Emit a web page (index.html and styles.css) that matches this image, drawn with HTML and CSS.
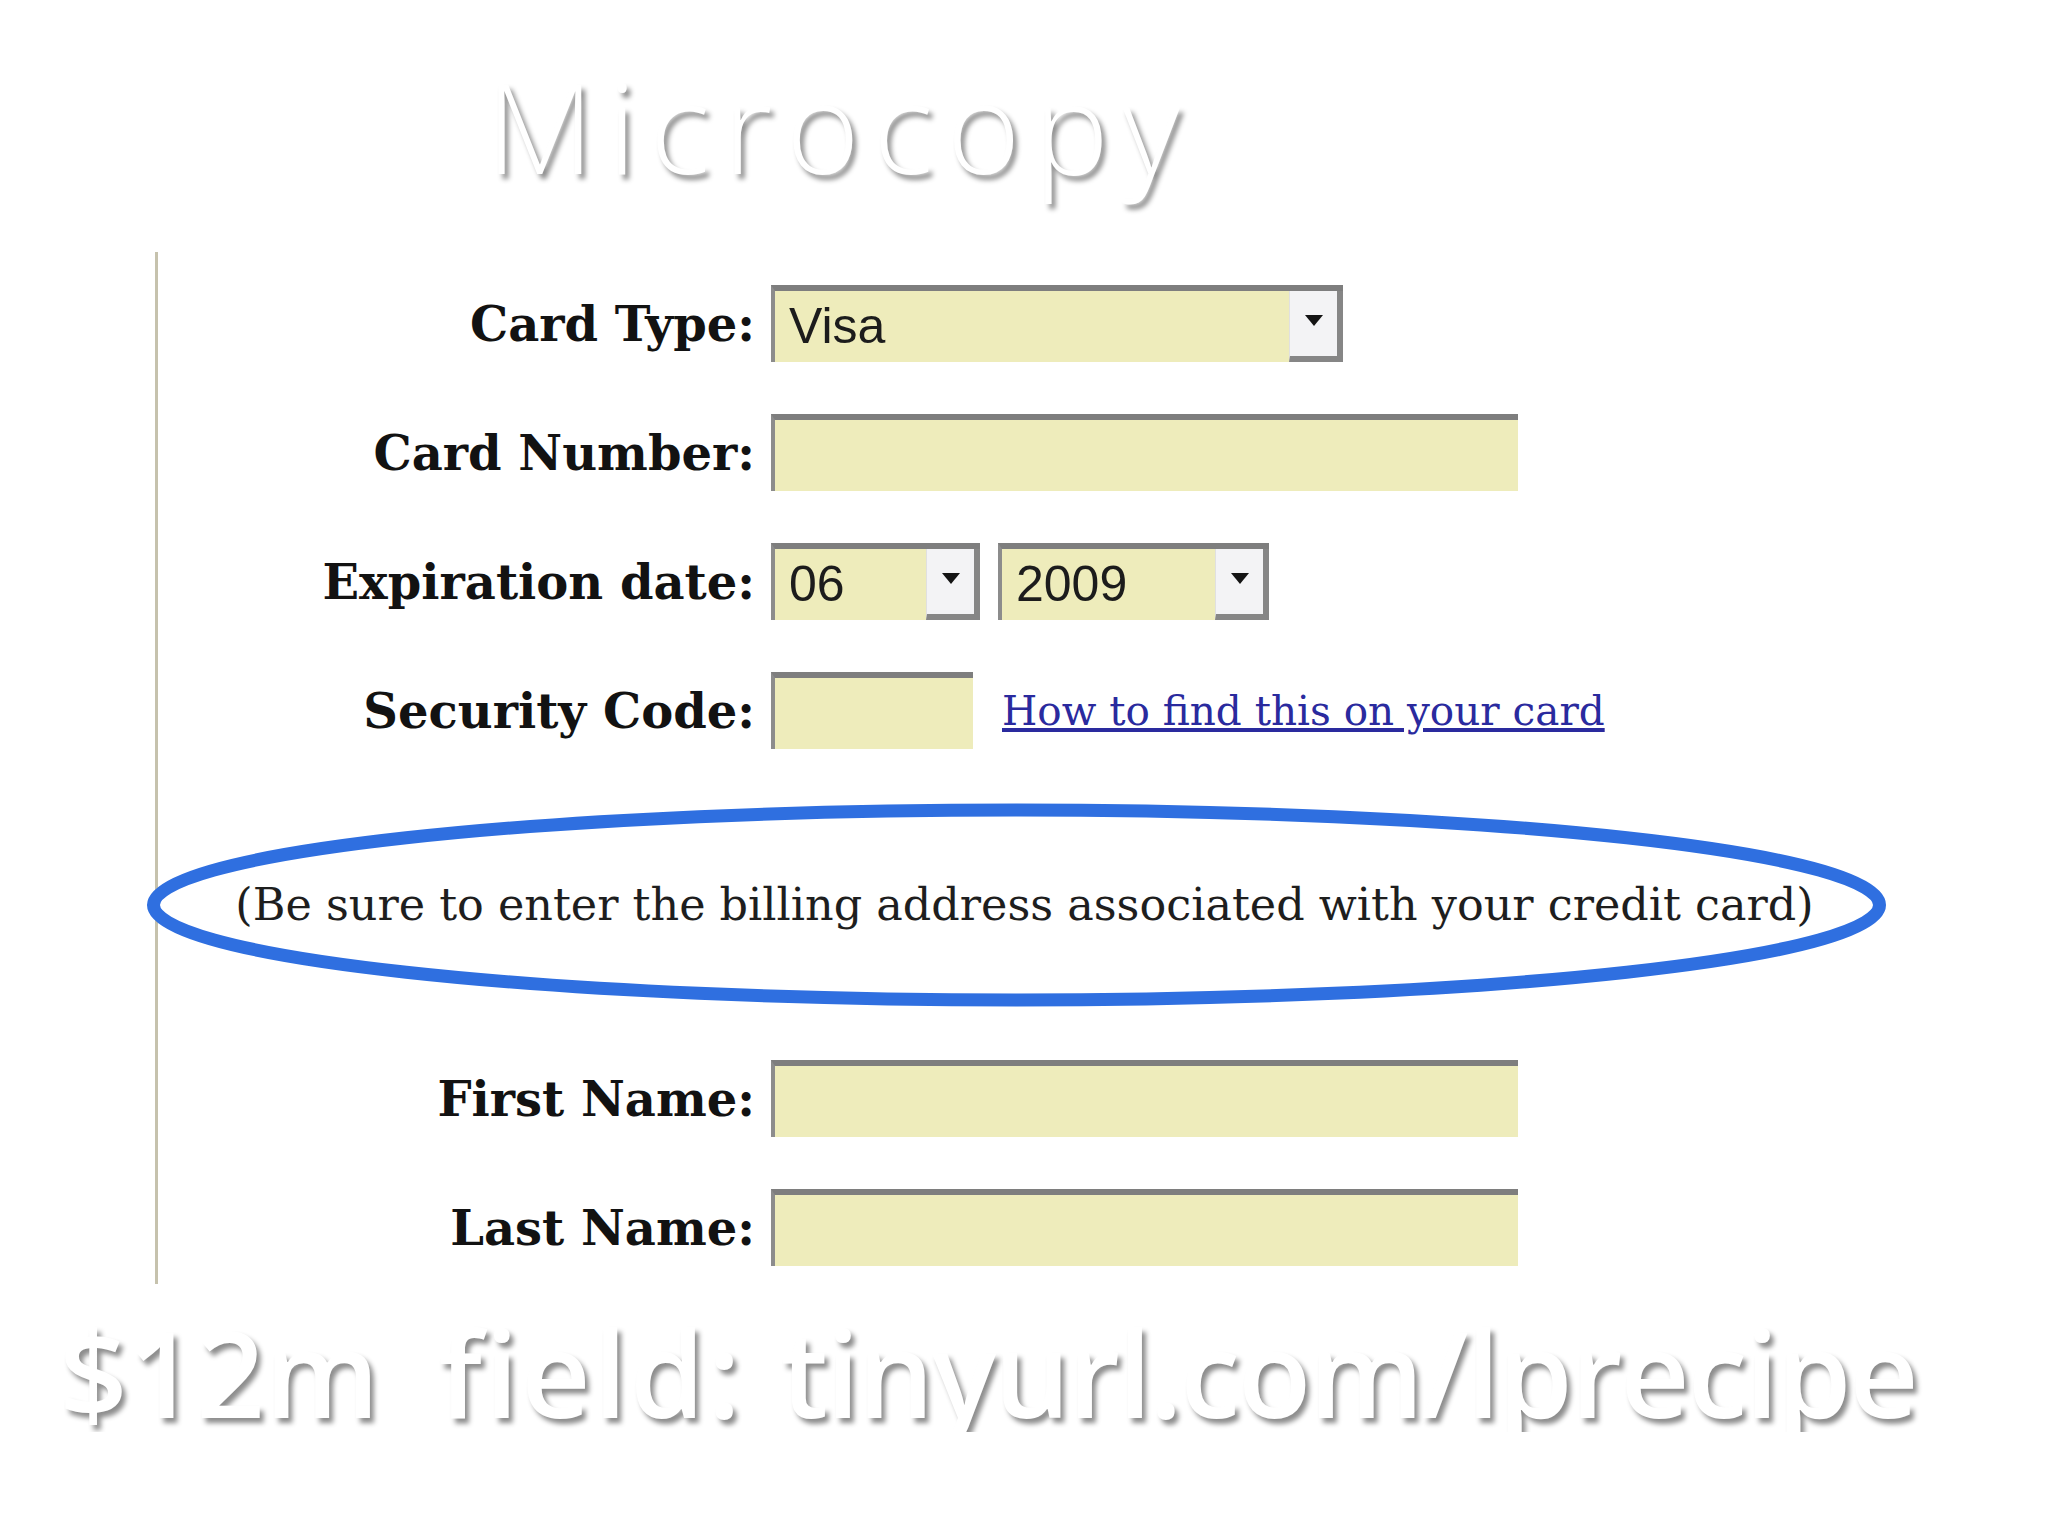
FILE: index.html
```html
<!DOCTYPE html>
<html lang="en">
<head>
    <meta charset="UTF-8">
    <meta name="viewport" content="width=device-width, initial-scale=1.0">
    <title>Microcopy</title>
    <link rel="stylesheet" href="styles.css">
</head>
<body>
    <h1 class="title">Microcopy</h1>

    <form class="payment-form">
        <div class="row">
            <label class="row-label">Card Type:</label>
            <div class="field select select-type">
                <span class="select-value">Visa</span>
                <span class="select-btn"></span>
            </div>
        </div>

        <div class="row">
            <label class="row-label" for="cardNumber">Card Number:</label>
            <input class="field input-wide" type="text" id="cardNumber">
        </div>

        <div class="row">
            <label class="row-label">Expiration date:</label>
            <div class="field select select-month">
                <span class="select-value">06</span>
                <span class="select-btn"></span>
            </div>
            <div class="field select select-year">
                <span class="select-value">2009</span>
                <span class="select-btn"></span>
            </div>
        </div>

        <div class="row">
            <label class="row-label" for="securityCode">Security Code:</label>
            <input class="field input-code" type="text" id="securityCode">
            <a class="help-link" href="#">How to find this on your card</a>
        </div>

        <div class="note">
            <svg class="note-ring" width="1741" height="207" viewBox="0 0 1741 207">
                <ellipse cx="870.5" cy="104" rx="863" ry="95" fill="none" stroke="#2f6fe0" stroke-width="13"/>
            </svg>
            <p>(Be sure to enter the billing address associated with your credit card)</p>
        </div>

        <div class="row">
            <label class="row-label" for="firstName">First Name:</label>
            <input class="field input-wide" type="text" id="firstName">
        </div>

        <div class="row row-last">
            <label class="row-label" for="lastName">Last Name:</label>
            <input class="field input-wide" type="text" id="lastName">
        </div>
    </form>

    <p class="caption"><span class="caption-amount">$12m</span> <span class="caption-label">field:</span> <span class="caption-url">tinyurl.com/lprecipe</span></p>
</body>
</html>
```

FILE: styles.css
```css
* {
    margin: 0;
    padding: 0;
    box-sizing: border-box;
}

body {
    font-family: "DejaVu Serif", Georgia, serif;
    background: #ffffff;
    color: #161616;
}

/* slide headings: white text lifted by a soft grey shadow */
.title,
.caption {
    font-family: "Open Sans", sans-serif;
    color: #ffffff;
    line-height: 1;
    text-shadow: 4px 5px 5px rgba(0, 0, 0, 0.45);
    white-space: nowrap;
}

.title {
    font-size: 125px;
    font-weight: 300;
    letter-spacing: 14px;
    margin: 63px 0 0 486px;
}

.caption {
    font-size: 120px;
    font-weight: 600;
    margin: 28px 0 0 59px;
}

.caption-amount {
    margin-right: 28px;
}

.caption-label {
    letter-spacing: 3px;
    margin-right: 6px;
}

.caption-url {
    letter-spacing: -2px;
}

/* checkout form */
.payment-form {
    width: 1736px;
    margin: 64px 0 0 155px;
    padding: 33px 0 18px;
    border-left: 3px solid #c6c2ad;
}

.row {
    display: flex;
    align-items: center;
    height: 77px;
    margin-bottom: 52px;
}

.row-last {
    margin-bottom: 0;
}

.row-label {
    width: 597px;
    margin-right: 16px;
    text-align: right;
    font-size: 48px;
    font-weight: bold;
    color: #121212;
}

.field {
    height: 77px;
    background: #eeecbb;
    border: 0;
    border-top: 6px solid #7e7e7e;
    border-left: 4px solid #8c8c8c;
    outline: none;
}

.input-wide {
    width: 747px;
}

.input-code {
    width: 202px;
}

.select {
    display: flex;
    align-items: stretch;
}

.select-type {
    width: 572px;
}

.select-month {
    width: 209px;
}

.select-year {
    width: 271px;
    margin-left: 18px;
}

.select-value {
    flex: 1;
    padding-left: 14px;
    font-family: "Liberation Sans", Arial, sans-serif;
    font-size: 50px;
    line-height: 71px;
    color: #1c1c1c;
}

.select-btn {
    width: 54px;
    display: flex;
    align-items: center;
    justify-content: center;
    background: #f3f3f5;
    border-left: 1px solid #e0e0e0;
    border-right: 6px solid #868686;
    border-bottom: 6px solid #868686;
}

.select-btn::after {
    content: "";
    margin-top: -6px;
    border-left: 9px solid transparent;
    border-right: 9px solid transparent;
    border-top: 11px solid #141414;
}

.help-link {
    margin-left: 29px;
    font-size: 40.5px;
    color: #2a2a9e;
    text-decoration: underline;
}

.note {
    position: relative;
    height: 207px;
    margin-bottom: 52px;
    display: flex;
    align-items: center;
    justify-content: center;
    font-size: 44.5px;
    color: #1e1e1e;
}

.note-ring {
    position: absolute;
    left: -12px;
    top: 0;
}
```
